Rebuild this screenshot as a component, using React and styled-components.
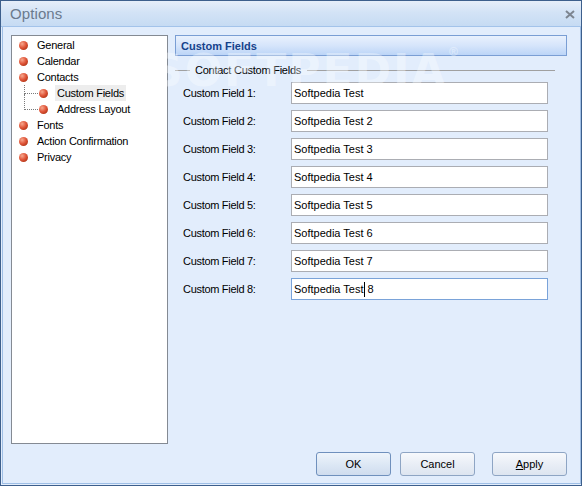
import React from "react";
import styled, { createGlobalStyle } from "styled-components";

const GlobalStyle = createGlobalStyle`
  html, body {
    margin: 0;
    padding: 0;
    background: #ffffff;
  }
  body {
    font-family: "Liberation Sans", Arial, sans-serif;
    font-size: 11px;
    color: #000;
  }
`;

const Window = styled.div`
  position: relative;
  width: 582px;
  height: 486px;
  box-sizing: border-box;
  border: 1px solid #3d5f8c;
  background: #e2edfc;
  display: flex;
  flex-direction: column;
  overflow: hidden;
`;

const TitleBar = styled.div`
  height: 25px;
  flex: none;
  display: flex;
  align-items: center;
  justify-content: space-between;
  padding: 0 6px 0 9px;
  background: linear-gradient(#e6eef9 0%, #d3e3f6 45%, #c6dbf3 100%);
  border-bottom: 1px solid #a3c3ea;
`;

const Title = styled.span`
  font-size: 15px;
  color: #6b7a8d;
  letter-spacing: 0.1px;
`;

const CloseButton = styled.svg`
  width: 10px;
  height: 9px;
  display: block;
  margin-top: 1px;
`;

const Client = styled.div`
  flex: 1;
  display: flex;
  flex-direction: column;
  margin: 0 0 1px 1px;
  border-left: 1px solid #9fbfe6;
  border-right: 1px solid #9fbfe6;
  border-bottom: 1px solid #9fbfe6;
  padding: 8px 13px 0 8px;
`;

const Main = styled.div`
  display: flex;
  gap: 7px;
  height: 409px;
`;

const Tree = styled.div`
  width: 157px;
  box-sizing: border-box;
  background: #ffffff;
  border: 1px solid #848a93;
  padding: 1px 0 0 0;
`;

const TreeBody = styled.div`
  position: relative;
`;

const TreeItem = styled.div`
  height: 16px;
  display: flex;
  align-items: center;
  padding-left: ${(p) => (p.$child ? 27 : 7)}px;
`;

const Bullet = styled.span`
  width: 9px;
  height: 9px;
  border-radius: 50%;
  flex: none;
  background: radial-gradient(circle at 35% 32%, #f7a88e 0%, #e0563a 45%, #b23516 80%, #8c2a12 100%);
  margin-right: 9px;
`;

const ItemText = styled.span`
  font-size: 11px;
  letter-spacing: -0.25px;
  line-height: 16px;
  padding: 0 2px;
  margin-left: -2px;
  background: ${(p) => (p.$selected ? "#ededed" : "transparent")};
`;

const TreeLines = styled.div`
  position: absolute;
  left: 12px;
  top: ${(p) => p.$top}px;
  width: 14px;
  height: ${(p) => p.$height}px;
  border-left: 1px dotted #7a7a7a;
  border-bottom: 1px dotted #7a7a7a;
  box-sizing: border-box;
`;

const Pane = styled.div`
  flex: 1;
  display: flex;
  flex-direction: column;
`;

const Header = styled.div`
  height: 21px;
  box-sizing: border-box;
  border: 1px solid #7a9ed4;
  background: linear-gradient(#e9f1fd 0%, #d6e5fb 50%, #bcd5f7 100%);
  color: #15428b;
  font-weight: bold;
  font-size: 11px;
  display: flex;
  align-items: center;
  padding-left: 5px;
`;

const Group = styled.div`
  display: flex;
  align-items: center;
  height: 12px;
  margin: 8px 12px 6px 0;
  color: #000;
  &::before,
  &::after {
    content: "";
    height: 1px;
    background: #a0a0a0;
  }
  &::before {
    width: 15px;
    margin-right: 5px;
  }
  &::after {
    flex: 1;
    margin-left: 6px;
  }
`;

const GroupLabel = styled.span`
  font-size: 11px;
  letter-spacing: -0.25px;
`;

const FieldRow = styled.div`
  display: flex;
  align-items: center;
  height: 22px;
  margin-bottom: 6px;
  padding-left: 8px;
`;

const FieldLabel = styled.span`
  width: 108px;
  font-size: 11px;
  letter-spacing: -0.3px;
`;

const TextBox = styled.div`
  width: 257px;
  height: 22px;
  box-sizing: border-box;
  background: #ffffff;
  border: 1px solid ${(p) => (p.$focused ? "#7aa3d9" : "#abadb3")};
  display: flex;
  align-items: center;
  padding-left: 2px;
  font-size: 11px;
  white-space: pre;
`;

const Caret = styled.span`
  display: inline-block;
  width: 1px;
  height: 15px;
  background: #000;
`;

const ButtonBar = styled.div`
  display: flex;
  justify-content: flex-end;
  margin-top: 8px;
  gap: 9px;
`;

const Button = styled.button`
  width: 75px;
  height: 24px;
  box-sizing: border-box;
  border: 1px solid ${(p) => (p.$default ? "#6f90bd" : "#8ea5c4")};
  border-radius: 3px;
  background: ${(p) =>
    p.$default
      ? "linear-gradient(#eef4fb 0%, #dde8f5 50%, #cfdcee 100%)"
      : "linear-gradient(#f7f9fc 0%, #e9eef6 50%, #dde5f0 100%)"};
  font-family: "Liberation Sans", Arial, sans-serif;
  font-size: 11px;
  color: #000;
  padding: 0;
  margin-left: ${(p) => (p.$spaced ? 8 : 0)}px;
  u {
    text-decoration: underline;
  }
`;

const Watermark = styled.div`
  position: absolute;
  left: 150px;
  top: 44px;
  font-family: "DejaVu Sans", sans-serif;
  font-weight: bold;
  font-size: 44px;
  letter-spacing: 2px;
  color: rgba(255, 255, 255, 0.35);
  pointer-events: none;
  sup {
    font-size: 12px;
    vertical-align: top;
  }
`;

const treeItems = [
  { label: "General" },
  { label: "Calendar" },
  { label: "Contacts" },
  { label: "Custom Fields", child: true, selected: true },
  { label: "Address Layout", child: true },
  { label: "Fonts" },
  { label: "Action Confirmation" },
  { label: "Privacy" },
];

const fields = [
  "Softpedia Test",
  "Softpedia Test 2",
  "Softpedia Test 3",
  "Softpedia Test 4",
  "Softpedia Test 5",
  "Softpedia Test 6",
  "Softpedia Test 7",
  "Softpedia Test 8",
];

function OptionsTree() {
  return (
    <Tree>
      <TreeBody>
        <TreeLines $top={48} $height={9} />
        <TreeLines $top={57} $height={16} />
        {treeItems.map((item) => (
          <TreeItem key={item.label} $child={item.child}>
            <Bullet />
            <ItemText $selected={item.selected}>{item.label}</ItemText>
          </TreeItem>
        ))}
      </TreeBody>
    </Tree>
  );
}

export default function App() {
  return (
    <>
      <GlobalStyle />
      <Window>
        <TitleBar>
          <Title>Options</Title>
          <CloseButton viewBox="0 0 10 9">
            <path d="M1 1 L9 8 M9 1 L1 8" stroke="#7d8590" strokeWidth="2" />
          </CloseButton>
        </TitleBar>
        <Client>
          <Main>
            <OptionsTree />
            <Pane>
              <Header>Custom Fields</Header>
              <Group>
                <GroupLabel>Contact Custom Fields</GroupLabel>
              </Group>
              {fields.map((value, index) => (
                <FieldRow key={index}>
                  <FieldLabel>Custom Field {index + 1}:</FieldLabel>
                  {index === 7 ? (
                    <TextBox $focused>
                      Softpedia Test
                      <Caret />
                      {" 8"}
                    </TextBox>
                  ) : (
                    <TextBox>{value}</TextBox>
                  )}
                </FieldRow>
              ))}
            </Pane>
          </Main>
          <ButtonBar>
            <Button $default>OK</Button>
            <Button>Cancel</Button>
            <Button $spaced>
              <u>A</u>pply
            </Button>
          </ButtonBar>
        </Client>
        <Watermark>
          SOFTPEDIA<sup>®</sup>
        </Watermark>
      </Window>
    </>
  );
}
